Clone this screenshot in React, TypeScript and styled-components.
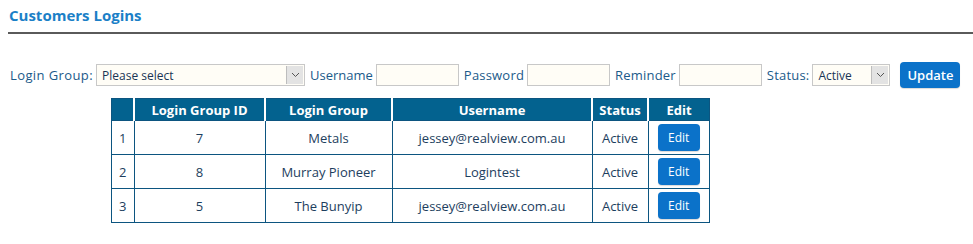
import React from "react"
import styled, { createGlobalStyle } from "styled-components"

const GlobalStyle = createGlobalStyle`
  body {
    margin: 0;
    background: #fff;
    font-family: "Open Sans", "Noto Sans", sans-serif;
  }
`

const Page = styled.div`
  padding: 6px 0 0 8px;
`

const Title = styled.h2`
  margin: 0 0 0 1px;
  font-size: 15px;
  font-weight: 700;
  line-height: 18px;
  color: #1b7fc7;
`

const Rule = styled.hr`
  margin: 8px 0 0;
  border: 0;
  border-top: 2px solid #5a5a5a;
`

const Filters = styled.form`
  display: flex;
  align-items: center;
  margin: 28px 0 0 2px;
  font-size: 13px;
  color: #1b5a8a;
`

const Label = styled.label<{ spacing?: number }>`
  margin-right: 3px;
  letter-spacing: ${({ spacing }) => spacing || 0}px;
`

const SelectBox = styled.div<{ width: number }>`
  position: relative;
  display: flex;
  align-items: center;
  width: ${({ width }) => width}px;
  height: 22px;
  box-sizing: border-box;
  border: 1px solid #c8c8c8;
  background: #fffdf6;
  margin-right: 5px;
  padding-left: 5px;
  font-size: 12px;
  color: #1a3555;
`

const Arrow = styled.span`
  position: absolute;
  top: 1px;
  right: 1px;
  bottom: 1px;
  width: 16px;
  display: flex;
  align-items: center;
  justify-content: center;
  background: #e3e3e3;
  border-left: 1px solid #bdbdbd;
`

const TextInput = styled.input`
  width: 83px;
  height: 22px;
  box-sizing: border-box;
  border: 1px solid #c8c8c8;
  background: #fffdf6;
  margin-right: 5px;
`

const Button = styled.button<{ small?: boolean }>`
  border: 0;
  border-radius: 4px;
  background: #0b72c9;
  color: #fff;
  font-family: inherit;
  font-weight: ${({ small }) => (small ? 400 : 600)};
  font-size: ${({ small }) => (small ? "12px" : "13px")};
  width: ${({ small }) => (small ? "42px" : "60px")};
  height: ${({ small }) => (small ? "27px" : "26px")};
  padding: 0;
  box-shadow: 0 1px 1px rgba(0, 0, 0, 0.15);
`

const UpdateButton = styled(Button)`
  margin-left: 5px;
`

const Table = styled.table`
  margin: 10px 0 0 103px;
  border-collapse: collapse;
  font-size: 13px;
  color: #1d3e5e;
  border: 1px solid #0c5580;
`

const Th = styled.th<{ width: number }>`
  width: ${({ width }) => width}px;
  height: 21px;
  padding: 0;
  background: #03628f;
  color: #fff;
  font-weight: 700;
  border-right: 2px solid #fff;
  &:last-child {
    border-right: 0;
  }
`

const Td = styled.td<{ left?: boolean }>`
  height: 33px;
  padding: 0 0 0 ${({ left }) => (left ? "7px" : "0")};
  text-align: ${({ left }) => (left ? "left" : "center")};
  border: 1px solid #0c5580;
`

const Chevron = () => (
  <svg width="9" height="6" viewBox="0 0 9 6">
    <path d="M1 1l3.5 3.5L8 1" fill="none" stroke="#555" strokeWidth="1" />
  </svg>
)

const rows = [
  { n: 1, id: 7, group: "Metals", user: "jessey@realview.com.au" },
  { n: 2, id: 8, group: "Murray Pioneer", user: "Logintest" },
  { n: 3, id: 5, group: "The Bunyip", user: "jessey@realview.com.au" },
]

export default function App() {
  return (
    <Page>
      <GlobalStyle />
      <Title>Customers Logins</Title>
      <Rule />
      <Filters>
        <Label spacing={0.4}>Login Group:</Label>
        <SelectBox width={209}>
          Please select
          <Arrow>
            <Chevron />
          </Arrow>
        </SelectBox>
        <Label>Username</Label>
        <TextInput />
        <Label spacing={0.2}>Password</Label>
        <TextInput />
        <Label spacing={0.2}>Reminder</Label>
        <TextInput />
        <Label spacing={0.2}>Status:</Label>
        <SelectBox width={78}>
          Active
          <Arrow>
            <Chevron />
          </Arrow>
        </SelectBox>
        <UpdateButton type="button">Update</UpdateButton>
      </Filters>
      <Table>
        <thead>
          <tr>
            <Th width={21} />
            <Th width={129}>Login Group ID</Th>
            <Th width={125}>Login Group</Th>
            <Th width={198}>Username</Th>
            <Th width={54}>Status</Th>
            <Th width={60}>Edit</Th>
          </tr>
        </thead>
        <tbody>
          {rows.map((r) => (
            <tr key={r.n}>
              <Td left>{r.n}</Td>
              <Td>{r.id}</Td>
              <Td>{r.group}</Td>
              <Td>{r.user}</Td>
              <Td>Active</Td>
              <Td>
                <Button small type="button">
                  Edit
                </Button>
              </Td>
            </tr>
          ))}
        </tbody>
      </Table>
    </Page>
  )
}
